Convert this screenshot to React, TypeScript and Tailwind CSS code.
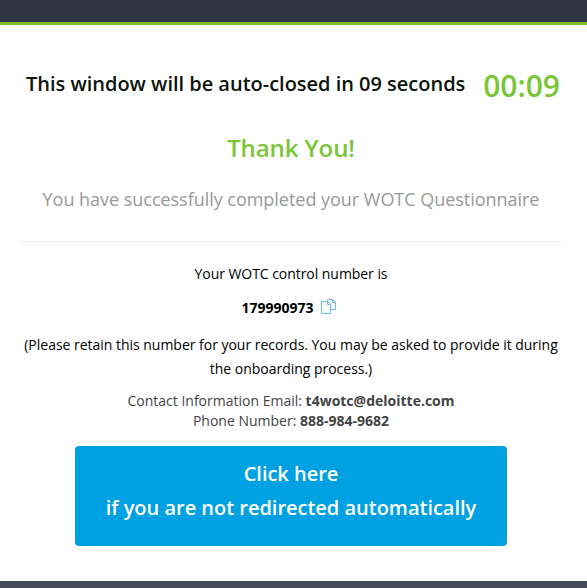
export default function App() {
  return (
    <div className="flex h-[588px] w-[587px] flex-col overflow-hidden bg-white font-['Open_Sans','Noto_Sans',sans-serif] text-black">
      <header className="h-[25px] shrink-0 border-b-[3px] border-[#86bc25] bg-[#2f3542]" />
      <main className="h-[556px] shrink-0 pr-[26px] pl-[21px] text-center">
        <div className="flex h-[118px] items-center justify-between pr-[1px] pl-[5px]">
          <h1 className="text-[20px] font-semibold tracking-[-0.015px] whitespace-nowrap text-[#0c140c]">This window will be auto-closed in 09 seconds</h1>
          <span className="pt-[2px] text-[30px] font-semibold text-[#7ac538]">00:09</span>
        </div>
        <h2 className="h-[42px] text-[24px] leading-[10px] font-semibold tracking-[-0.1px] text-[#7ac538]">Thank You!</h2>
        <p className="text-[18px] leading-[28px] tracking-[-0.03px] text-[#999]">You have successfully completed your WOTC Questionnaire</p>
        <hr className="mt-[28px] border-[#eee]" />
        <p className="mt-[20px] text-[14px] leading-[24px] tracking-[-0.05px]">Your WOTC control number is</p>
        <div className="mt-[9px] flex h-6 items-center justify-center gap-[7px] pr-[5px] text-[14px] font-bold">
          179990973
          <svg className="mb-[2px]" width="15" height="15" viewBox="0 0 15 15" fill="none" stroke="#6db5ff">
            <path d="M.5 2.5h6l3 3v9h-9zM6.5 2.5v3h3" />
            <path d="M6.5 2.5v-2h5l3 3v7h-5M11.5.5v3h3" />
          </svg>
        </div>
        <p className="mt-[14px] text-[14px] leading-[24px] tracking-[-0.02px]">(Please retain this number for your records. You may be asked to provide it during<br />the onboarding process.)</p>
        <p className="mt-[10px] text-[14px] leading-[20px] text-[#444]">Contact Information Email: <b>t4wotc@deloitte.com</b><br />Phone Number: <b>888-984-9682</b></p>
        <button className="mt-[15px] h-[100px] w-[432px] rounded-[4px] bg-[#00a1e2] pb-[10px] text-[20px] leading-[34px] font-semibold tracking-[-0.015px] text-white">Click here<br />if you are not redirected automatically</button>
      </main>
      <footer className="h-[7px] shrink-0 bg-[#454b57]" />
    </div>
  );
}
